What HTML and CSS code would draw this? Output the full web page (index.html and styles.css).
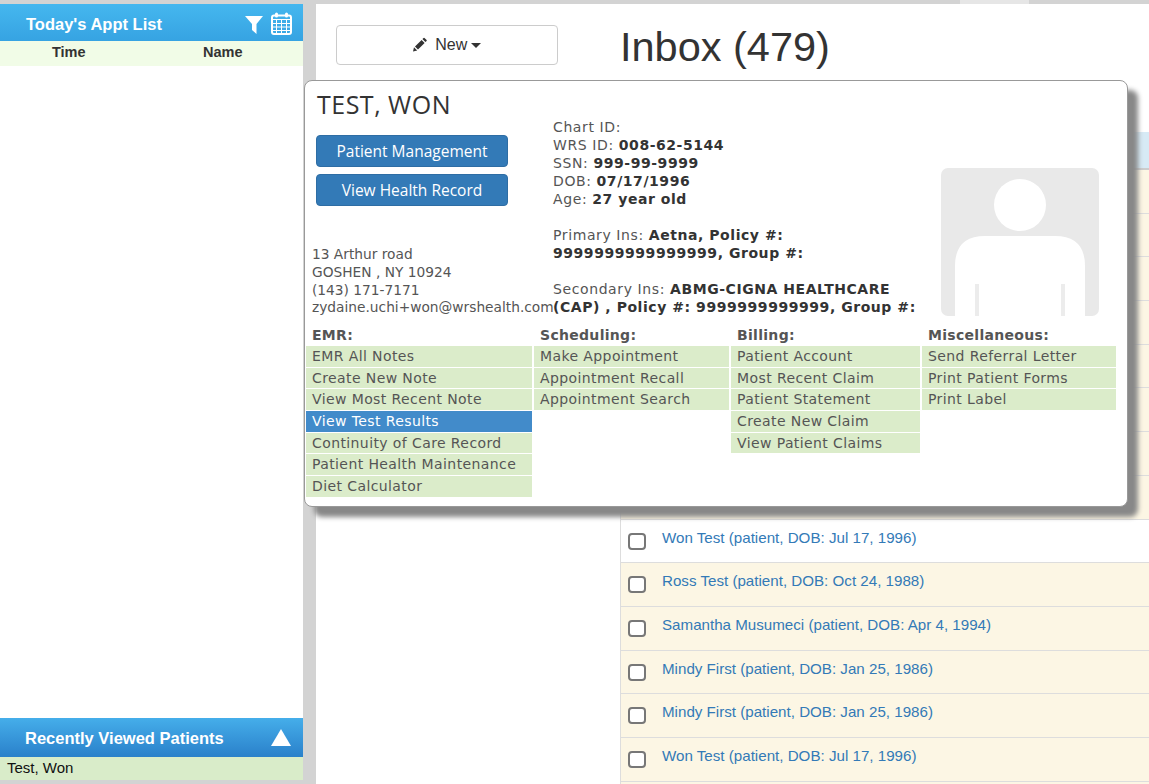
FILE: index.html
```html
<!DOCTYPE html>
<html lang="en">
<head>
    <meta charset="UTF-8">
    <meta name="viewport" content="width=device-width, initial-scale=1.0">
    <title>Inbox</title>
    <link rel="stylesheet" href="styles.css">
</head>
<body>
    <div class="top-strip"><span class="top-tab"></span></div>

    <div class="page">
        <!-- Left sidebar -->
        <aside class="sidebar">
            <div class="side-head">
                <span class="side-title">Today's Appt List</span>
                <svg class="icon-filter" viewBox="0 0 18 18" width="18" height="18">
                    <path d="M0 0H18L11.5 8V18L7 14V8Z" fill="#fff"/>
                </svg>
                <svg class="icon-calendar" viewBox="0 0 21 23" width="21" height="23">
                    <rect x="1" y="3.5" width="19" height="18.5" rx="2" fill="none" stroke="#fff" stroke-width="2"/>
                    <rect x="4" y="0.5" width="3" height="5" rx="1.5" fill="#fff"/>
                    <rect x="14" y="0.5" width="3" height="5" rx="1.5" fill="#fff"/>
                    <path d="M1 7.5H20M1 11.5H20M1 15H20M1 18.5H20M5.5 7V22M10.5 7V22M15.5 7V22" stroke="#fff" stroke-width="1" fill="none"/>
                </svg>
            </div>
            <div class="appt-cols">
                <span class="col-time">Time</span>
                <span class="col-name">Name</span>
            </div>
            <div class="side-fill"></div>
            <div class="side-head side-head-recent">
                <span class="side-title">Recently Viewed Patients</span>
                <span class="triangle-up"></span>
            </div>
            <div class="recent-row">Test, Won</div>
        </aside>

        <!-- Main content -->
        <main class="main">
            <div class="main-left">
                <button class="new-btn">
                    <svg class="icon-pencil" viewBox="0 0 14 14" width="14" height="15">
                        <path d="M0 14L1 9.8L4.2 13ZM2 9L8.6 2.4L11.6 5.4L5 12ZM9.4 1.6L10.6 0.4Q11 0 11.5 0.4L13.6 2.5Q14 3 13.6 3.4L12.4 4.6Z" fill="#333"/>
                    </svg>
                    New<span class="caret"></span>
                </button>
            </div>
            <div class="main-right">
                <h1>Inbox (479)</h1>
                <div class="inbox-table">
                    <div class="inbox-head"></div>
                    <div class="inbox-row"></div>
                    <div class="inbox-row"></div>
                    <div class="inbox-row"></div>
                    <div class="inbox-row"></div>
                    <div class="inbox-row"></div>
                    <div class="inbox-row"></div>
                    <div class="inbox-row"></div>
                    <div class="inbox-row"></div>
                    <div class="inbox-row read"><input type="checkbox"><a href="#">Won Test (patient, DOB: Jul 17, 1996)</a></div>
                    <div class="inbox-row"><input type="checkbox"><a href="#">Ross Test (patient, DOB: Oct 24, 1988)</a></div>
                    <div class="inbox-row"><input type="checkbox"><a href="#">Samantha Musumeci (patient, DOB: Apr 4, 1994)</a></div>
                    <div class="inbox-row"><input type="checkbox"><a href="#">Mindy First (patient, DOB: Jan 25, 1986)</a></div>
                    <div class="inbox-row"><input type="checkbox"><a href="#">Mindy First (patient, DOB: Jan 25, 1986)</a></div>
                    <div class="inbox-row"><input type="checkbox"><a href="#">Won Test (patient, DOB: Jul 17, 1996)</a></div>
                    <div class="inbox-row"></div>
                </div>
            </div>
        </main>
    </div>

    <!-- Patient popup, sits over the page -->
    <div class="patient-popup">
        <div class="popup-top">
            <div class="popup-left">
                <h2>TEST, WON</h2>
                <a class="blue-btn" href="#">Patient Management</a>
                <a class="blue-btn" href="#">View Health Record</a>
                <div class="address">
                    13 Arthur road<br>
                    GOSHEN , NY 10924<br>
                    (143) 171-7171<br>
                    zydaine.uchi+won@wrshealth.com
                </div>
            </div>
            <div class="popup-info">
                Chart ID:<br>
                WRS ID: <b>008-62-5144</b><br>
                SSN: <b>999-99-9999</b><br>
                DOB: <b>07/17/1996</b><br>
                Age: <b>27 year old</b><br>
                <br>
                Primary Ins: <b>Aetna, Policy #: 9999999999999999, Group #:</b><br>
                <br>
                Secondary Ins: <b>ABMG-CIGNA HEALTHCARE (CAP) , Policy #: 9999999999999, Group #:</b>
            </div>
            <div class="photo">
                <svg viewBox="0 0 158 148" width="158" height="148">
                    <circle cx="79" cy="37" r="26" fill="#fff"/>
                    <path d="M14 148V98Q14 68 44 68H114Q144 68 144 98V148Z" fill="#fff"/>
                    <path d="M36 116V148M122 116V148" stroke="#ececec" stroke-width="4"/>
                </svg>
            </div>
        </div>
        <div class="popup-menus">
            <div class="menu-col">
                <div class="menu-title">EMR:</div>
                <a href="#">EMR All Notes</a>
                <a href="#">Create New Note</a>
                <a href="#">View Most Recent Note</a>
                <a href="#" class="active">View Test Results</a>
                <a href="#">Continuity of Care Record</a>
                <a href="#">Patient Health Maintenance</a>
                <a href="#">Diet Calculator</a>
            </div>
            <div class="menu-col">
                <div class="menu-title">Scheduling:</div>
                <a href="#">Make Appointment</a>
                <a href="#">Appointment Recall</a>
                <a href="#">Appointment Search</a>
            </div>
            <div class="menu-col">
                <div class="menu-title">Billing:</div>
                <a href="#">Patient Account</a>
                <a href="#">Most Recent Claim</a>
                <a href="#">Patient Statement</a>
                <a href="#">Create New Claim</a>
                <a href="#">View Patient Claims</a>
            </div>
            <div class="menu-col">
                <div class="menu-title">Miscellaneous:</div>
                <a href="#">Send Referral Letter</a>
                <a href="#">Print Patient Forms</a>
                <a href="#">Print Label</a>
            </div>
        </div>
    </div>
</body>
</html>
```

FILE: styles.css
```css
* {
    margin: 0;
    padding: 0;
    box-sizing: border-box;
}

html, body {
    height: 100%;
    overflow: hidden;
}

body {
    font-family: "Liberation Sans", Arial, sans-serif;
    background-color: #d3d3d3;
    color: #333;
    position: relative;
}

.top-strip {
    height: 4px;
    padding-left: 960px;
}

.top-tab {
    display: block;
    width: 69px;
    height: 4px;
    background-color: #e6e6e6;
}

.page {
    display: flex;
    height: 780px;
}

/* Sidebar */
.sidebar {
    width: 303px;
    height: 776px;
    display: flex;
    flex-direction: column;
    background-color: white;
}

.side-head {
    height: 37px;
    flex-shrink: 0;
    display: flex;
    align-items: center;
    padding-left: 26px;
    background: linear-gradient(#45b7ef, #36a3e2);
    color: white;
}

.side-title {
    margin-top: 4px;
    margin-right: auto;
    font-size: 16.5px;
    font-weight: bold;
}

.icon-filter {
    margin-top: 4px;
    margin-right: 8px;
}

.icon-calendar {
    margin-top: 2px;
    margin-right: 11px;
}

.appt-cols {
    height: 25px;
    flex-shrink: 0;
    display: flex;
    align-items: center;
    padding-bottom: 3px;
    background-color: #f1fce7;
    font-size: 14.5px;
    font-weight: bold;
}

.col-time {
    margin-left: 52px;
    width: 151px;
}

.side-fill {
    flex: 1;
}

.side-head-recent {
    height: 39px;
    padding-left: 25px;
    background: linear-gradient(#45aeea, #2a80ca);
}

.side-head-recent .side-title {
    margin-top: 2px;
}

.triangle-up {
    width: 0;
    height: 0;
    margin-right: 12px;
    border-left: 10px solid transparent;
    border-right: 10px solid transparent;
    border-bottom: 17px solid white;
}

.recent-row {
    height: 23px;
    flex-shrink: 0;
    line-height: 22px;
    padding-left: 7px;
    font-size: 15px;
    color: #111;
    background-color: #d9ecc9;
}

/* Main */
.main {
    flex: 1;
    margin-left: 13px;
    display: flex;
    overflow: hidden;
    background-color: white;
}

.main-left {
    width: 304px;
    padding: 21px 0 0 20px;
}

.new-btn {
    width: 222px;
    height: 40px;
    font-family: inherit;
    font-size: 16px;
    color: #333;
    background-color: white;
    border: 1px solid #ccc;
    border-radius: 4px;
}

.icon-pencil {
    margin-right: 4px;
    vertical-align: -2px;
}

.caret {
    display: inline-block;
    margin-left: 4px;
    vertical-align: middle;
    border-top: 5px solid #333;
    border-left: 5px solid transparent;
    border-right: 5px solid transparent;
}

.main-right {
    flex: 1;
    min-width: 0;
}

h1 {
    height: 128px;
    padding-top: 15px;
    font-size: 41.5px;
    font-weight: normal;
    line-height: 56px;
}

.inbox-table {
    border-left: 1px solid #ddd;
}

.inbox-head {
    height: 38px;
    background-color: #d7eaf5;
    border-bottom: 2px solid #ccc;
}

.inbox-row {
    height: 43.7px;
    display: flex;
    align-items: flex-start;
    padding-left: 7px;
    background-color: #fcf6e4;
    border-bottom: 1px solid #ddd;
}

.inbox-row.read {
    background-color: white;
}

.inbox-row input {
    appearance: none;
    width: 18px;
    height: 17px;
    margin-top: 13px;
    margin-right: 16px;
    background-color: white;
    border: 2px solid #777;
    border-radius: 4px;
}

.inbox-row a {
    margin-top: 9px;
    font-size: 15.15px;
    color: #337ab7;
    text-decoration: none;
}

/* Patient popup */
.patient-popup {
    position: absolute;
    left: 304px;
    top: 80px;
    width: 824px;
    height: 427px;
    padding-top: 8px;
    background-color: white;
    border: 1px solid #999;
    border-radius: 8px;
    box-shadow: 10px 10px 5px #888;
    font-family: "DejaVu Sans", Verdana, sans-serif;
    font-size: 14px;
    line-height: 18px;
    color: #555;
}

.popup-top {
    display: flex;
    height: 228px;
}

.popup-left {
    width: 248px;
    display: flex;
    flex-direction: column;
    align-items: flex-start;
    padding-left: 7px;
    white-space: nowrap;
}

.popup-left h2 {
    margin-top: -1px;
    margin-left: 5px;
    margin-bottom: 15px;
    font-family: "Open Sans", sans-serif;
    font-size: 25px;
    letter-spacing: 0.5px;
    line-height: 32px;
    font-weight: normal;
    color: #333;
}

.blue-btn {
    width: 192px;
    height: 31.5px;
    margin-left: 4px;
    margin-bottom: 7.5px;
    line-height: 30px;
    text-align: center;
    font-family: "Open Sans", sans-serif;
    font-size: 15.5px;
    color: white;
    text-decoration: none;
    background-color: #337ab7;
    border: 1px solid #2e6da4;
    border-radius: 4px;
}

.address {
    margin-top: auto;
    font-size: 13.75px;
    line-height: 17.7px;
}

.popup-info {
    width: 372px;
    padding-top: 29px;
    letter-spacing: 0.6px;
}

.popup-info b {
    color: #333;
    letter-spacing: 0.55px;
}

.photo {
    width: 158px;
    height: 148px;
    margin-left: 16px;
    margin-top: 79px;
    overflow: hidden;
    background-color: #e9e9e9;
    border-radius: 7px;
}

.photo svg {
    display: block;
}

.popup-menus {
    display: grid;
    grid-template-columns: 226px 195px 189px 194px;
    column-gap: 2px;
    align-items: start;
    padding-left: 1px;
    margin-top: 8px;
    letter-spacing: 0.4px;
}

.menu-col {
    display: flex;
    flex-direction: column;
    row-gap: 1px;
}

.menu-title {
    height: 20px;
    padding-top: 1px;
    padding-left: 6px;
    font-weight: bold;
    letter-spacing: 0.3px;
}

.menu-col a {
    height: 20.7px;
    line-height: 20.5px;
    padding-left: 6px;
    color: #555;
    text-decoration: none;
    background-color: #dbecca;
}

.menu-col a.active {
    color: white;
    background-color: #428bca;
}
```
